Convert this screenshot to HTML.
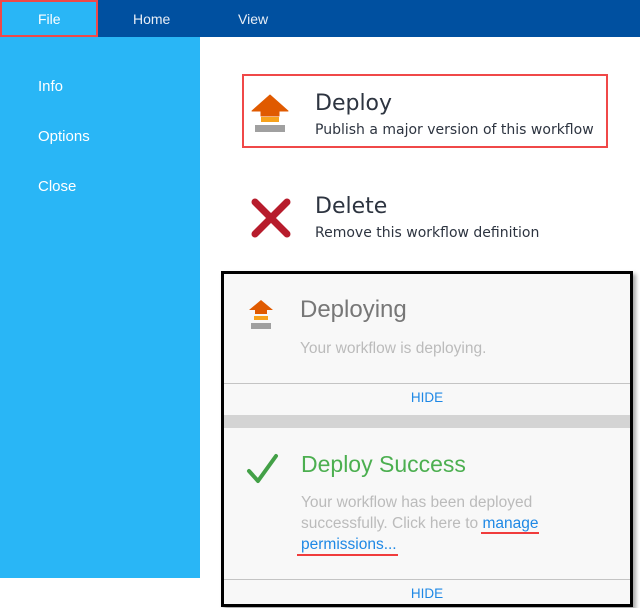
<!DOCTYPE html>
<html><head><meta charset="utf-8"><style>
*{margin:0;padding:0;box-sizing:border-box}
body{width:640px;height:608px;background:#fff;font-family:"Liberation Sans","DejaVu Sans",sans-serif;position:relative;overflow:hidden}
.abs{position:absolute}
.top{left:0;top:0;width:640px;height:37px;background:#0050a0}
.tab{top:0;height:37px;line-height:38px;color:#e8eef6;font-size:14px}
.side{left:0;top:37px;width:200px;height:541px;background:#29b6f6}
.si{left:38px;color:#fff;font-size:15px}
.t1{font-size:22px;color:#2d3440;font-family:"DejaVu Sans",sans-serif}
.t2{font-size:14px;color:#2d3440;font-family:"DejaVu Sans",sans-serif}
.panel{left:221px;top:271px;width:412px;height:336px;border:3px solid #000;background:#f8f8f8;box-shadow:3px 3px 4px rgba(0,0,0,.35)}
.hide{color:#1e88e5;font-size:13.5px;text-align:center;width:100%;left:0}
.g{color:#bbb;font-size:15.5px;line-height:21px}
</style></head><body>
<div class="abs top"></div>
<div class="abs" style="left:0;top:0;width:98px;height:37px;background:#29b6f6;border:2px solid #f04848"></div>
<div class="abs tab" style="left:38px;color:#fff">File</div>
<div class="abs tab" style="left:133px">Home</div>
<div class="abs tab" style="left:238px">View</div>
<div class="abs side"></div>
<div class="abs si" style="top:78px">Info</div>
<div class="abs si" style="top:128px">Options</div>
<div class="abs si" style="top:178px">Close</div>

<div class="abs" style="left:242px;top:74px;width:366px;height:74px;border:2px solid #f04848"></div>
<svg class="abs" style="left:250px;top:94px" width="40" height="42" viewBox="0 0 40 42"><path d="M20 1 L38 17 L29 17 L29 22 L11 22 L11 17 L2 17 Z" fill="#e05a00" stroke="#e05a00" stroke-width="1" stroke-linejoin="round"/><rect x="11" y="23" width="18" height="5" fill="#f7a21b"/><rect x="5" y="31" width="30" height="7" fill="#a0a0a0"/></svg>
<div class="abs t1" style="left:315px;top:91px">Deploy</div>
<div class="abs t2" style="left:315px;top:122px">Publish a major version of this workflow</div>

<svg class="abs" style="left:250px;top:197px" width="42" height="42" viewBox="0 0 42 42"><path d="M5 5 L37 37 M37 5 L5 37" stroke="#b71c2c" stroke-width="7" stroke-linecap="round"/></svg>
<div class="abs t1" style="left:315px;top:194px">Delete</div>
<div class="abs t2" style="left:315px;top:225px">Remove this workflow definition</div>

<div class="abs panel">
<svg class="abs" style="left:23px;top:25px" width="28" height="32" viewBox="0 0 28 32"><path d="M14 1 L26 11 L20 11 L20 15 L8 15 L8 11 L2 11 Z" fill="#e05a00"/><rect x="7" y="17" width="14" height="4" fill="#f7a21b"/><rect x="4" y="24" width="20" height="6" fill="#a0a0a0"/></svg>
<div class="abs" style="left:76px;top:22px;font-size:24px;color:#777">Deploying</div>
<div class="abs g" style="left:76px;top:64px">Your workflow is deploying.</div>
<div class="abs" style="left:0;top:109px;width:100%;height:1px;background:#c4c4c4"></div>
<div class="abs hide" style="top:116px">HIDE</div>
<div class="abs" style="left:0;top:141px;width:100%;height:13px;background:#d4d4d4"></div>
<svg class="abs" style="left:22px;top:178px" width="34" height="34" viewBox="0 0 34 34"><path d="M3 19 L12 29 L30 4" stroke="#43a047" stroke-width="4" fill="none" stroke-linecap="round" stroke-linejoin="round"/></svg>
<div class="abs" style="left:77px;top:177px;font-size:23px;color:#4caf50">Deploy Success</div>
<div class="abs g" style="left:77px;top:218px;width:280px">Your workflow has been deployed<br>successfully. Click here to <span style="color:#1e88e5">manage</span><br><span style="color:#1e88e5">permissions...</span></div>
<div class="abs" style="left:257px;top:258px;width:58px;height:2px;background:#f03c3c"></div>
<div class="abs" style="left:73px;top:280px;width:101px;height:2px;background:#f03c3c"></div>
<div class="abs" style="left:0;top:305px;width:100%;height:1px;background:#c4c4c4"></div>
<div class="abs hide" style="top:312px">HIDE</div>
</div>
</body></html>
